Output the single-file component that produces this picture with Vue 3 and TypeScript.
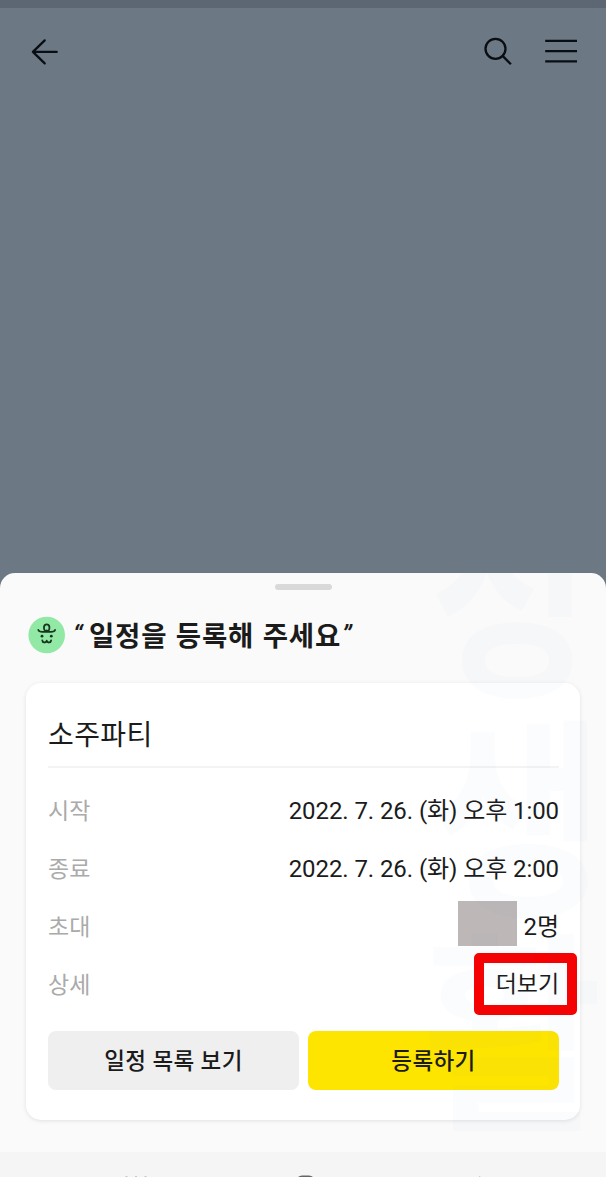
<script setup lang="ts">
interface Detail {
  label: string
  value: string
  kind?: 'invite' | 'more'
}

const details: Detail[] = [
  { label: '시작', value: '2022. 7. 26. (화) 오후 1:00' },
  { label: '종료', value: '2022. 7. 26. (화) 오후 2:00' },
  { label: '초대', value: '2명', kind: 'invite' },
  { label: '상세', value: '더보기', kind: 'more' },
]
</script>

<template>
  <div class="screen">
    <div class="status"></div>
    <header class="topbar">
      <svg class="back" width="28" height="28" viewBox="0 0 28 28">
        <path d="M14.7 2.4 2.9 13.9 14.7 25.4M2.9 13.9H26.7" />
      </svg>
      <svg class="search" width="30" height="30" viewBox="0 0 30 30">
        <circle cx="12.5" cy="11.8" r="10" />
        <path d="M19.6 18.9 27.9 27.2" />
      </svg>
      <svg class="menu" width="32" height="26" viewBox="0 0 32 26">
        <path d="M.2 1.8H32M.2 12.2H32M.2 22.3H32" />
      </svg>
    </header>

    <main class="sheet">
      <div class="handle"></div>
      <div class="heading">
        <svg class="avatar" width="38" height="38" viewBox="0 0 38 38">
          <circle class="face" cx="18.7" cy="19" r="18.3" />
          <path d="M10.3 13.9c.4 1.6 2.2 2 4.2 2h8.4c2 0 3.8-.4 4.2-2M17.2 15.7c-2.2-3.4-1.5-7.3 1.5-7.3s3.7 3.9 1.5 7.3c-1-1.6-2-1.6-3 0" />
          <path d="M14.3 24.5c.4 2.6 3.8 2.6 4.4.2.6 2.4 4 2.4 4.4-.2" />
          <circle class="eye" cx="14" cy="20.2" r="1.4" />
          <circle class="eye" cx="23.3" cy="20.2" r="1.4" />
        </svg>
        <h1><span class="quote open">“</span><span class="phrase">일정을 등록해 주세요</span><span class="quote close">”</span></h1>
      </div>

      <section class="card">
        <h2>소주파티</h2>
        <div v-for="item in details" :key="item.label" class="row">
          <span class="label">{{ item.label }}</span>
          <span class="value" :class="item.kind">
            <i v-if="item.kind === 'invite'" class="mask"></i>
            <span>{{ item.value }}</span>
            <i v-if="item.kind === 'more'" class="highlight"></i>
          </span>
        </div>
        <div class="actions">
          <button type="button">일정 목록 보기</button>
          <button type="button" class="primary">등록하기</button>
        </div>
      </section>
    </main>

    <footer class="navbar">
      <svg width="606" height="25" viewBox="0 0 606 25">
        <path d="M126.5 24.5V32M136 24.5V32M145.5 24.5V32M480.5 25l-8 8" />
        <rect class="home" x="297" y="24.5" width="17" height="17" rx="5" />
      </svg>
    </footer>

    <svg class="watermark" width="606" height="1177" viewBox="0 0 606 1177">
      <text transform="translate(430 680) scale(.82 1)">성</text>
      <text transform="translate(432 899) scale(.88 1)">생</text>
      <text transform="translate(423 1113) scale(.92 1)">활</text>
    </svg>
  </div>
</template>

<style>
body {
  margin: 0;
}
</style>

<style scoped>
.screen {
  position: relative;
  display: flex;
  flex-direction: column;
  width: 606px;
  height: 1177px;
  overflow: hidden;
  background: #6c7883;
  color: #1b1b1b;
  font-family: Roboto, "Noto Sans CJK KR", sans-serif;
}
.status {
  height: 8px;
  background: #5c6773;
}
.topbar {
  display: flex;
  align-items: center;
  box-sizing: border-box;
  height: 88px;
  padding: 0 29px 0 30px;
}
.topbar svg {
  fill: none;
  stroke: #090e14;
  stroke-width: 2.3;
  stroke-linecap: round;
  stroke-linejoin: round;
}
.topbar .search,
.topbar .menu {
  stroke-linecap: butt;
}
.search {
  margin-left: auto;
}
.menu {
  margin-left: 32px;
}
.sheet {
  box-sizing: border-box;
  height: 579px;
  margin-top: 477px;
  padding: 11px 26px 0;
  border-radius: 15px 15px 0 0;
  background: #fafafa;
}
.handle {
  width: 57px;
  height: 6px;
  margin: 0 auto;
  border-radius: 3px;
  background: #d9d9d9;
}
.heading {
  display: flex;
  align-items: center;
  height: 38px;
  margin-top: 26px;
  padding-left: 2px;
}
.avatar {
  flex: none;
  fill: none;
  stroke: #17351f;
  stroke-width: 1.8;
  stroke-linecap: round;
  stroke-linejoin: round;
}
.face {
  fill: #92e9a5;
  stroke: none;
}
.eye {
  fill: #17351f;
  stroke: none;
}
h1 {
  display: flex;
  margin: 0 0 2px 8px;
  font: 700 27.5px/38px "Noto Sans CJK KR", sans-serif;
  white-space: nowrap;
}
.phrase {
  letter-spacing: 0.8px;
  word-spacing: 1.5px;
}
.quote {
  width: 16px;
  font-family: Roboto, sans-serif;
  font-size: 26px;
  font-style: italic;
  font-weight: 500;
}
.open {
  margin-left: -1px;
}
.close {
  margin-left: 1px;
}
.card {
  box-sizing: border-box;
  height: 437px;
  margin-top: 29px;
  padding: 22px 21px 0 22px;
  border-radius: 15px;
  background: #fff;
  box-shadow: 0 1px 4px rgba(0, 0, 0, 0.1);
}
h2 {
  box-sizing: border-box;
  height: 63px;
  margin: 0 0 12px;
  border-bottom: 2px solid #f3f3f3;
  font: 400 28px/57px "Noto Sans CJK KR", sans-serif;
  letter-spacing: 0.4px;
}
.row {
  display: flex;
  align-items: center;
  justify-content: space-between;
  height: 58px;
  font-size: 24px;
}
.label {
  color: #aaa;
  font-family: "Noto Sans CJK KR", sans-serif;
  font-size: 23px;
}
.value {
  position: relative;
  top: -1px;
  display: flex;
  align-items: center;
  letter-spacing: -0.08px;
}
.more {
  font-size: 23px;
}
.mask {
  width: 59px;
  height: 45px;
  margin: -2px 7px 0 0;
  background: #bdb7b7;
}
.highlight {
  position: absolute;
  top: -12px;
  right: -18px;
  width: 83px;
  height: 42px;
  border: 10px solid #f80000;
  border-radius: 5px;
}
.actions {
  display: flex;
  gap: 9px;
  margin-top: 19px;
}
button {
  flex: 1;
  height: 59px;
  padding: 0 0 4px;
  border: 0;
  border-radius: 8px;
  background: #efefef;
  color: #1b1b1b;
  font: 500 22.5px "Noto Sans CJK KR", sans-serif;
  letter-spacing: 0.4px;
  word-spacing: 0.5px;
}
.primary {
  background: #fee500;
}
.navbar {
  height: 25px;
  background: #f5f5f5;
}
.navbar svg {
  display: block;
  fill: none;
  stroke: #999;
  stroke-width: 2;
}
.navbar .home {
  stroke: #666;
}
.watermark {
  position: absolute;
  inset: 0;
  clip-path: inset(573px 0 0 0);
  pointer-events: none;
}
.watermark text {
  fill: #4a78a0;
  fill-opacity: 0.024;
  font: 700 212px "Noto Sans CJK KR", sans-serif;
}
</style>
